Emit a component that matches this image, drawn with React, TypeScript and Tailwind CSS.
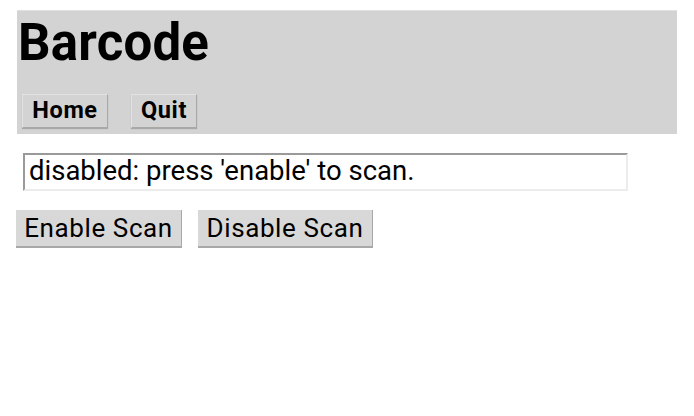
export default function App() {
  return (
    <div className="w-[694px] h-[416px] bg-white" style={{ fontFamily: "Roboto, 'Noto Sans', sans-serif" }}>
      <div className="pt-[10px] px-[17px]">
        <div className="bg-[#d3d3d3] border-t border-[#e0e0e0] w-[660px] h-[124px] flex flex-col">
          <h1 className="text-[51px] leading-none font-bold text-black pl-[1px] pt-[6px] tracking-[0.2px]">Barcode</h1>
          <div className="flex gap-[23px] pl-[5px] mt-[26px]">
            <button className="h-[34px] w-[86px] bg-[#d3d3d3] text-[23.5px] tracking-[0.6px] font-bold text-black border-r border-b border-[#a8a8a8] border-l border-t border-l-[#e2e2e2] border-t-[#e2e2e2] shadow-[0_1px_1px_rgba(0,0,0,0.2)] leading-none flex items-center justify-center">Home</button>
            <button className="h-[34px] w-[66px] bg-[#d3d3d3] text-[23.5px] tracking-[0.6px] font-bold text-black border-r border-b border-[#a8a8a8] border-l border-t border-l-[#e2e2e2] border-t-[#e2e2e2] shadow-[0_1px_1px_rgba(0,0,0,0.2)] leading-none flex items-center justify-center">Quit</button>
          </div>
        </div>
      </div>
      <div className="pl-[23px] mt-[19px]">
        <div className="w-[605px] h-[38px] bg-white border-2 border-t-[#9a9a9a] border-l-[#9a9a9a] border-r-[#ececec] border-b-[#ececec] flex items-center pl-[4px] pb-[2px] text-[27.5px] text-black leading-none">
          disabled: press 'enable' to scan.
        </div>
      </div>
      <div className="flex gap-[16px] pl-[16px] mt-[19px]">
        <button className="h-[38px] w-[166px] bg-[#d8d8d8] text-[26px] tracking-[0.6px] text-black border-b-2 border-r border-[#a8a8a8] leading-none flex items-center justify-center">Enable Scan</button>
        <button className="h-[38px] w-[175px] bg-[#d8d8d8] text-[26px] tracking-[0.6px] text-black border-b-2 border-r border-[#a8a8a8] leading-none flex items-center justify-center">Disable Scan</button>
      </div>
    </div>
  );
}
